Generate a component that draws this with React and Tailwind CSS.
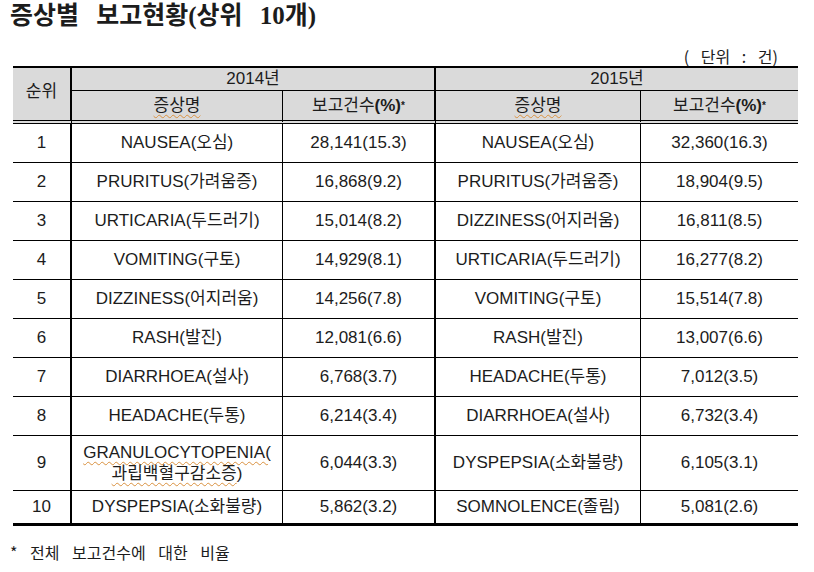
const ROWS = [
  { n: 1, a: 'NAUSEA(오심)', ac: '28,141(15.3)', b: 'NAUSEA(오심)', bc: '32,360(16.3)' },
  { n: 2, a: 'PRURITUS(가려움증)', ac: '16,868(9.2)', b: 'PRURITUS(가려움증)', bc: '18,904(9.5)' },
  { n: 3, a: 'URTICARIA(두드러기)', ac: '15,014(8.2)', b: 'DIZZINESS(어지러움)', bc: '16,811(8.5)' },
  { n: 4, a: 'VOMITING(구토)', ac: '14,929(8.1)', b: 'URTICARIA(두드러기)', bc: '16,277(8.2)' },
  { n: 5, a: 'DIZZINESS(어지러움)', ac: '14,256(7.8)', b: 'VOMITING(구토)', bc: '15,514(7.8)' },
  { n: 6, a: 'RASH(발진)', ac: '12,081(6.6)', b: 'RASH(발진)', bc: '13,007(6.6)' },
  { n: 7, a: 'DIARRHOEA(설사)', ac: '6,768(3.7)', b: 'HEADACHE(두통)', bc: '7,012(3.5)' },
  { n: 8, a: 'HEADACHE(두통)', ac: '6,214(3.4)', b: 'DIARRHOEA(설사)', bc: '6,732(3.4)' },
  { n: 9, a: null, ac: '6,044(3.3)', b: 'DYSPEPSIA(소화불량)', bc: '6,105(3.1)' },
  { n: 10, a: 'DYSPEPSIA(소화불량)', ac: '5,862(3.2)', b: 'SOMNOLENCE(졸림)', bc: '5,081(2.6)' },
];

const squiggle = 'underline decoration-wavy decoration-[#d9913f] decoration-1 underline-offset-[3px]';
const cell = 'flex items-center justify-center text-center border-black';

function CountHead() {
  return (
    <span>
      보고건수<b className="font-bold">(%)</b>
      <sup className="text-[10px] font-bold relative -top-[2px]">*</sup>
    </span>
  );
}

function Granulo() {
  return (
    <span className="leading-[21px]">
      <span className={squiggle}>GRANULOCYTOPENIA(</span>
      <br />
      <span className={squiggle}>과립백혈구감소증</span>)
    </span>
  );
}

export default function App() {
  return (
    <div className="w-[814px] h-[572px] bg-white text-[#1c1c1c] font-['Liberation_Sans','Noto_Sans_CJK_KR',sans-serif]">
      <h1 className="pl-[10px] pt-[1px] leading-[30px] text-[25px] font-bold [word-spacing:11px] font-['Liberation_Serif','Noto_Sans_CJK_KR',serif]">
        증상별 보고현황(상위 10개)
      </h1>
      <div className="mt-[15px] h-[20px] leading-[20px] text-right pr-[36px] text-[16px] [word-spacing:8px] font-['Noto_Sans_CJK_KR',sans-serif]">
        ( 단위 : 건)
      </div>

      <div className="ml-[13px] w-[785px] border-x-0 border-t-2 border-b-[3px] border-black grid grid-cols-[59px_211px_153px_205px_157px] grid-rows-[23px_33px_repeat(8,39px)_55px_32px] text-[17px]">
        <div className={`${cell} row-span-2 bg-[#dadada] border-l-0 border-r-2 border-b-4 border-double`}>
          <span className="pb-[4px]">순위</span>
        </div>
        <div className={`${cell} col-span-2 bg-[#dadada] border-r-2 border-b`}>2014년</div>
        <div className={`${cell} col-span-2 bg-[#dadada] border-r-0 border-b`}>2015년</div>

        <div className={`${cell} bg-[#dadada] border-r border-b-4 border-double`}>
          <span className={squiggle}>증상명</span>
        </div>
        <div className={`${cell} bg-[#dadada] border-r-2 border-b-4 border-double`}>
          <CountHead />
        </div>
        <div className={`${cell} bg-[#dadada] border-r border-b-4 border-double`}>
          <span className={squiggle}>증상명</span>
        </div>
        <div className={`${cell} bg-[#dadada] border-r-0 border-b-4 border-double`}>
          <CountHead />
        </div>

        {ROWS.map((r) => {
          const bottom = r.n === 10 ? '' : 'border-b';
          return [
            <div key={`${r.n}-n`} className={`${cell} border-l-0 border-r-2 ${bottom}`}>{r.n}</div>,
            <div key={`${r.n}-a`} className={`${cell} border-r ${bottom}`}>{r.a ?? <Granulo />}</div>,
            <div key={`${r.n}-ac`} className={`${cell} border-r-2 ${bottom}`}>{r.ac}</div>,
            <div key={`${r.n}-b`} className={`${cell} border-r ${bottom}`}>{r.b}</div>,
            <div key={`${r.n}-bc`} className={`${cell} border-r-0 ${bottom}`}>{r.bc}</div>,
          ];
        })}
      </div>

      <p className="mt-[16px] pl-[10px] text-[16px] leading-[20px] [word-spacing:9px] font-['Noto_Sans_CJK_KR',sans-serif]">
        * 전체 보고건수에 대한 비율
      </p>
    </div>
  );
}
